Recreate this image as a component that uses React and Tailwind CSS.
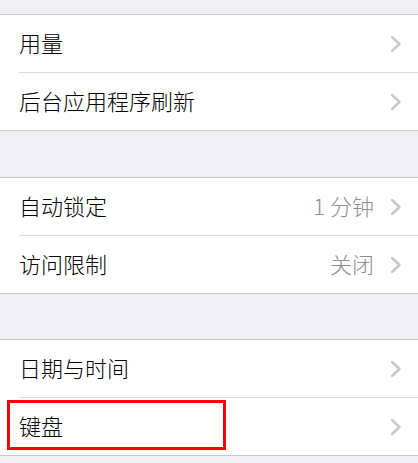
const font = { fontFamily: '"Noto Sans CJK SC", "Noto Sans", sans-serif' };

const groups = [
  [{ label: "用量" }, { label: "后台应用程序刷新" }],
  [
    { label: "自动锁定", value: "1 分钟" },
    { label: "访问限制", value: "关闭" },
  ],
  [{ label: "日期与时间" }, { label: "键盘", marked: true }],
];

function Chevron() {
  return (
    <svg width="12" height="18" viewBox="0 0 12 18" fill="none">
      <polyline
        points="2,2 9.5,9 2,16"
        stroke="#c7c7cc"
        strokeWidth="2.4"
        strokeLinecap="round"
        strokeLinejoin="round"
      />
    </svg>
  );
}

function Row({ item, last }) {
  return (
    <div className={`relative flex pl-[19px] ${last ? "h-[57px]" : "h-[58px]"}`}>
      <div
        className={`flex flex-1 items-center gap-[16px] pr-[16px] ${
          last ? "" : "border-b border-[#d9d9de]"
        }`}
      >
        <span className="flex-1 pb-[4px] text-[22px] font-light leading-none text-black">
          {item.label}
        </span>
        {item.value && (
          <span className="pb-[4px] text-[22px] font-light leading-none text-[#8e8e93]">
            {item.value}
          </span>
        )}
        <Chevron />
      </div>
      {/* red highlight frame drawn over the row */}
      {item.marked && (
        <div className="absolute left-[7px] top-[2px] h-[50px] w-[219px] border-[3px] border-[#ff0000]" />
      )}
    </div>
  );
}

export default function App() {
  return (
    <div className="h-[463px] w-[418px] overflow-hidden bg-[#efeff4] pt-[14px]" style={font}>
      {groups.map((rows, gi) => (
        <div key={gi} className={gi === 0 ? "mb-[46px]" : gi === 1 ? "mb-[45px]" : ""}>
          <div className="border-y border-[#c8c7cc] bg-white">
            {rows.map((item, i) => (
              <Row key={item.label} item={item} last={i === rows.length - 1} />
            ))}
          </div>
        </div>
      ))}
    </div>
  );
}
